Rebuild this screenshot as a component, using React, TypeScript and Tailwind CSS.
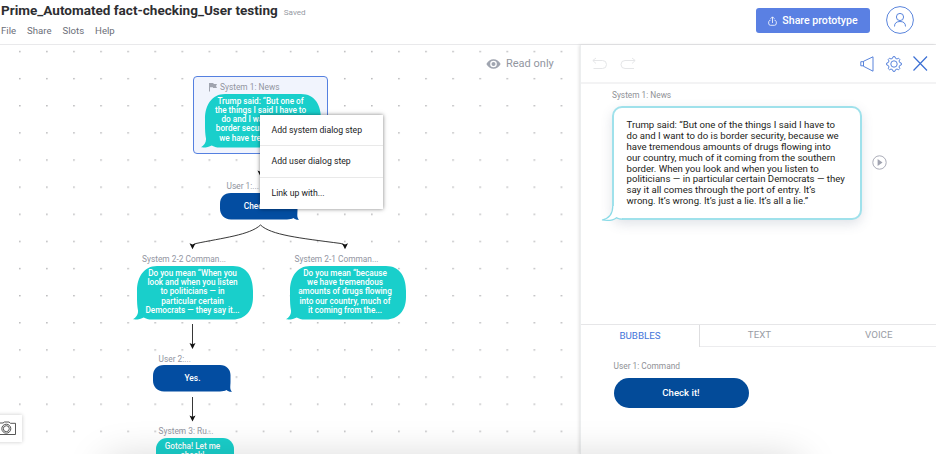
import React from "react";

type BubbleProps = {
  label: string;
  lines: string[];
  kind: "system" | "user";
  place: string;
  labelPlace: string;
};

function SystemShape() {
  return (
    <svg className="absolute -left-1 top-0" width="120" height="54" viewBox="0 0 120 54">
      <path
        d="M24 0H100C114 0 120 11 120 25V31C120 45 112 53.5 100 53.5H19C15 53.5 13 52.4 10.7 51.4C8 53 4 53.7 0 53.3C3 51.5 5.4 48.5 5 44.5C4.2 40 4 36 4 31V25C4 11 11 0 24 0Z"
        fill="#19cfcb"
      />
    </svg>
  );
}

function UserShape() {
  return (
    <svg className="absolute left-0 top-0" width="80" height="28" viewBox="0 0 80 28">
      <path
        d="M11 0H67C73.5 0 77.5 4.5 77.5 10V17C77.5 21 76.5 24.3 79 26.7C76.5 26.8 75 26.5 73.4 25C71.6 26 70 26.4 67 26.4H11C4 26.4 0 21.5 0 15.5V11C0 4.5 4 0 11 0Z"
        fill="#034da1"
      />
    </svg>
  );
}

function Node({ label, lines, kind, place, labelPlace }: BubbleProps) {
  const system = kind === "system";
  return (
    <>
      <div className={`absolute whitespace-nowrap text-[8.35px] leading-[12px] text-[#92959f] ${labelPlace}`}>{label}</div>
      <div className={`absolute ${place}`}>
        {system ? <SystemShape /> : <UserShape />}
        <div
          className={`relative text-center font-medium text-white ${
            system ? "w-[111px] pt-[3.5px] text-[8.2px] leading-[9.1px]" : "w-[80px] pt-2 text-[8.4px] leading-[10px]"
          }`}
        >
          {lines.map((line) => (
            <div key={line} className="whitespace-nowrap">
              {line}
            </div>
          ))}
        </div>
      </div>
    </>
  );
}

function Dots() {
  return (
    <svg className="absolute inset-0" width="580" height="410">
      <defs>
        <pattern id="dots" x="19" y="5.8" width="27.08" height="27.13" patternUnits="userSpaceOnUse">
          <rect width="1.6" height="1.4" fill="#b8b8ba" />
        </pattern>
      </defs>
      <rect width="580" height="410" fill="url(#dots)" />
    </svg>
  );
}

function Connectors() {
  return (
    <svg className="absolute inset-0" width="580" height="410" viewBox="0 45 580 410">
      <g fill="none" stroke="#202020" strokeWidth=".9">
        <path d="M260.5 225C250 235 222 238 196 243.500Q192.5 244.500 192.5 247" />
        <path d="M260.5 225C271 235 299 238 341 243.500Q345 244.500 345 247" />
        <path d="M192.5 324V345M192.5 397V417M260.5 155V172" />
      </g>
      <g fill="#111">
        <path d="M189.500 243.300L192.5 244.500L195.500 243.300L192.5 249.300Z" />
        <path d="M342 243.300L345 244.500L348 243.300L345 249.300Z" />
        <path d="M189.500 343L192.5 344.200L195.500 343L192.5 349Z" />
        <path d="M189.500 415.500L192.5 416.700L195.500 415.500L192.5 421.5Z" />
        <path d="M257.500 170.500L260.5 171.700L263.500 170.500L260.5 176.5Z" />
      </g>
    </svg>
  );
}

function Canvas() {
  return (
    <section className="relative w-[579.5px] shrink-0 overflow-hidden bg-white">
      <Dots />
      <div className="absolute left-[193px] top-[31px] h-[78px] w-[135px] rounded-[4px] border border-[#5580e0] bg-[#f1f4fd]" />
      <Connectors />
      <svg className="absolute left-[209px] top-[37px]" width="9" height="10" viewBox="0 0 9 10">
        <path d="M.5 1V9.5" stroke="#a0a4af" />
        <path d="M1 1H4.5V2H8L7 4L8 6H4V5.2H1Z" fill="#a0a4af" />
      </svg>
      <Node
        kind="system"
        label="System 1: News"
        labelPlace="left-[220px] top-[36px]"
        place="left-[205px] top-[48.7px]"
        lines={["Trump said: “But one of", "the things I said I have to", "do and I want to do is", "border security, because", "we have tremendous..."]}
      />
      <Node kind="user" label="User 1:..." labelPlace="left-[226.5px] top-[135px]" place="left-[220px] top-[148px]" lines={["Check it!"]} />
      <Node
        kind="system"
        label="System 2-2 Comman..."
        labelPlace="left-[142px] top-[208px]"
        place="left-[137px] top-[220.8px]"
        lines={["Do you mean “When you", "look and when you listen", "to politicians — in", "particular certain", "Democrats — they say it..."]}
      />
      <Node
        kind="system"
        label="System 2-1 Comman..."
        labelPlace="left-[294.5px] top-[208px]"
        place="left-[289.5px] top-[220.8px]"
        lines={["Do you mean “because", "we have tremendous", "amounts of drugs flowing", "into our country, much of", "it coming from the..."]}
      />
      <Node kind="user" label="User 2:..." labelPlace="left-[158.5px] top-[308px]" place="left-[152.5px] top-[320.4px]" lines={["Yes."]} />
      <div className="absolute left-[158.5px] top-[380px] whitespace-nowrap text-[8.35px] leading-[12px] text-[#92959f]">System 3: Ru...</div>
      <div className="absolute left-[155.5px] top-[393px] h-[30px] w-[78px] rounded-t-[11px] bg-[#19cfcb] pr-1 pt-[3.5px] text-center text-[8.2px] font-medium leading-[9.1px] text-white">
        <div>Gotcha! Let me</div>
        <div>check!</div>
      </div>

      <div className="absolute left-[486px] top-[12px] flex items-center gap-[5px] text-[11px] leading-[14px] text-[#92969f]">
        <svg width="15" height="10" viewBox="0 0 15 10">
          <path d="M.4 5C2 2 4.500 .3 7.500 .3S13 2 14.600 5C13 8 10.500 9.700 7.500 9.700S2 8 .4 5Z" fill="#a0a5b0" />
          <circle cx="7.500" cy="5" r="3.300" fill="white" />
          <circle cx="7.500" cy="5" r="2" fill="#a0a5b0" />
        </svg>
        <span className="whitespace-nowrap">Read only</span>
      </div>

      <div className="absolute left-[260px] top-[70px] w-[122.500px] divide-y divide-[#e9e9e9] bg-white text-[8.700px] text-[#202124] shadow-[0_0_4px_rgba(0,0,0,0.5)]">
        {["Add system dialog step", "Add user dialog step", "Link up with..."].map((item) => (
          <div key={item} className="flex h-[31.300px] items-center whitespace-nowrap pl-[11.500px] pt-[.5px]">
            {item}
          </div>
        ))}
      </div>

      <div className="absolute -left-1 top-[370px] h-[27px] w-[26px] bg-white shadow-[0_0_4px_rgba(0,0,0,0.22)]">
        <svg className="absolute left-1 top-[6px]" width="17" height="15" viewBox="0 0 17 15" fill="none" stroke="#444" strokeWidth=".9">
          <path d="M0 2H3L4.500 1H9L10.500 2.300H15.500V13.500H0" />
          <circle cx="6.300" cy="7.700" r="4.500" />
          <circle cx="6.300" cy="7.700" r="3" />
        </svg>
      </div>
    </section>
  );
}

function Inspector() {
  return (
    <aside className="z-10 flex min-w-0 flex-1 flex-col border-l border-[#eceeef] bg-white shadow-[-1px_0_3px_rgba(0,0,0,0.12)]">
      <div className="flex h-[39px] shrink-0 items-center border-b-2 border-[#f3f3f4] pl-[11px] pr-2">
        <svg width="15" height="13" viewBox="0 0 15 13" fill="none" stroke="#e5e6e8">
          <path d="M4 1L.8 3.500L4 6.500M1 3.500H10.500Q14.500 3.500 14.500 7.500Q14.500 11.500 10.500 11.500H1.500" />
        </svg>
        <svg className="ml-[13px]" width="16" height="13" viewBox="0 0 16 13" fill="none" stroke="#e5e6e8">
          <path d="M12 1L15.200 3.500L12 6.500M15 3.500H5Q1 3.500 1 7.500Q1 11.500 5 11.500H14" />
        </svg>
        <svg className="ml-auto" width="14" height="16" viewBox="0 0 14 16" fill="none" stroke="#4777d8" strokeWidth=".9">
          <path d="M13 .8V15.200L3.500 10.300V5.300L13 .8ZM3.500 5.700H.8V9.800H3.500" />
        </svg>
        <svg className="ml-[12.500px]" width="16" height="16" viewBox="0 0 16 16" fill="none" stroke="#4777d8" strokeWidth=".9">
          <path d="M6.500 2.300L7 .7H9L9.500 2.300L11 3L12.500 2.200L13.800 3.500L13 5L13.700 6.500L15.300 7V9L13.700 9.500L13 11L13.800 12.500L12.500 13.800L11 13L9.500 13.700L9 15.300H7L6.500 13.700L5 13L3.500 13.800L2.200 12.500L3 11L2.300 9.500L.7 9V7L2.300 6.500L3 5L2.200 3.500L3.500 2.200L5 3Z" strokeLinejoin="round" />
          <circle cx="8" cy="8" r="3.200" />
        </svg>
        <svg className="ml-[10px]" width="16" height="15" viewBox="0 0 16 15" fill="none" stroke="#3b6fd4" strokeWidth="1.200">
          <path d="M1.500 .5L15 14.500M15 .5L1.500 14.500" />
        </svg>
      </div>

      <div className="flex h-[240px] shrink-0 flex-col pl-[31px] pt-[5px]">
        <div className="pl-[.5px] text-[8.300px] leading-[12px] text-[#8f9196]">System 1: News</div>
        <div className="relative mt-[4.500px] flex items-center">
          <div className="h-[114px] w-[250px] whitespace-nowrap rounded-[10px] border-2 border-[#9fe1eb] bg-white pl-[13px] pt-[12.500px] text-[9.620px] leading-[10.880px] text-[#1c1d20] shadow-[0_4px_12px_rgba(70,90,120,0.17)]">
            Trump said: “But one of the things I said I have to
            <br />
            do and I want to do is border security, because we
            <br />
            have tremendous amounts of drugs flowing into
            <br />
            our country, much of it coming from the southern
            <br />
            border. When you look and when you listen to
            <br />
            politicians — in particular certain Democrats — they
            <br />
            say it all comes through the port of entry. It’s
            <br />
            wrong. It’s wrong. It’s just a lie. It’s all a lie.”
          </div>
          <svg className="absolute -left-[11px] top-[100px]" width="22" height="16" viewBox="0 0 22 16">
            <path d="M11.500 1C11.500 8 8 12.500 1 14C7 15 12 14.500 15.500 11.500Q18 13 21 13.400L21 0H11.500Z" fill="white" />
            <path d="M11.800 0C11.800 8 8 12.500 1 14C7 15 12 14.500 15.500 11.700Q18 13 21.500 13.200" fill="none" stroke="#8bdbe7" strokeWidth="1.200" />
          </svg>
          <svg className="ml-[10px]" width="15" height="15" viewBox="0 0 15 15">
            <circle cx="7.500" cy="7.500" r="6.700" fill="none" stroke="#a0a3b0" strokeWidth=".9" />
            <path d="M5.600 4L10.500 7.500L5.600 11Z" fill="#a0a3b0" />
          </svg>
        </div>
      </div>

      <nav className="flex h-[23px] shrink-0 border-t border-[#e6e6e8] text-[9.750px] text-[#999da5]">
        <div className="flex w-[119px] items-center justify-center border-r border-[#dedee0] pl-px text-[#4374d9]">BUBBLES</div>
        <div className="flex w-[119px] items-center justify-center border-b border-[#ececee] pl-px">TEXT</div>
        <div className="flex flex-1 items-center justify-center border-b border-[#ececee] pl-[3px]">VOICE</div>
      </nav>

      <div className="flex flex-col items-start pl-[33px] pt-[13px]">
        <div className="text-[8.350px] leading-[12px] text-[#8f9196]">User 1: Command</div>
        <button className="mt-[6px] h-[30px] w-[135px] rounded-full bg-[#034b99] text-[9.600px] font-medium text-white">Check it!</button>
      </div>
    </aside>
  );
}

export default function App() {
  return (
    <div className="relative flex h-[454px] w-[936px] flex-col overflow-hidden bg-white font-['Roboto',sans-serif]">
      <header className="flex h-[45px] shrink-0 justify-between border-b border-[#e9e9eb] pl-px pr-[22px]">
        <div>
          <div className="flex items-center gap-[6px] pt-[2px]">
            <h1 className="whitespace-nowrap text-[13.540px] font-bold leading-[17px] text-[#2d2e31]">Prime_Automated fact-checking_User testing</h1>
            <span className="pt-[2px] text-[8.100px] leading-[12px] text-[#969aa3]">Saved</span>
          </div>
          <nav className="mt-[5px] flex gap-[11px] text-[9.600px] leading-[13px] text-[#6b6e78]">
            <span>File</span>
            <span>Share</span>
            <span>Slots</span>
            <span>Help</span>
          </nav>
        </div>
        <div className="flex items-start gap-4">
          <button className="mt-2 flex h-[25px] w-[114px] items-center justify-center gap-[5px] rounded-[3px] bg-[#5a80e3] text-[10.600px] font-medium text-white">
            <svg width="9" height="10" viewBox="0 0 9 10" fill="none" stroke="white" strokeWidth=".8">
              <path d="M4.500 7V1M2.500 2.800L4.500 .8L6.500 2.800M2.500 4.200H1.800Q.6 5 .6 7Q.6 9.300 2.500 9.300H6.500Q8.400 9.300 8.400 7Q8.400 5 7.200 4.200H6.500" />
            </svg>
            <span className="whitespace-nowrap">Share prototype</span>
          </button>
          <svg className="mt-[6px]" width="28" height="28" viewBox="0 0 28 28" fill="none" stroke="#4777d8" strokeWidth=".9">
            <circle cx="14" cy="14" r="13.400" />
            <circle cx="14" cy="11" r="3.600" />
            <path d="M8.500 20.500C8.500 17 10.500 15.500 14 15.500S19.500 17 19.500 20.500" />
          </svg>
        </div>
      </header>
      <main className="flex min-h-0 flex-1">
        <Canvas />
        <Inspector />
      </main>
      <div className="pointer-events-none absolute left-[108px] top-[466px] z-20 h-5 w-[690px] rounded-full shadow-[0_0_40px_4px_rgba(0,0,0,0.22)]" />
    </div>
  );
}
